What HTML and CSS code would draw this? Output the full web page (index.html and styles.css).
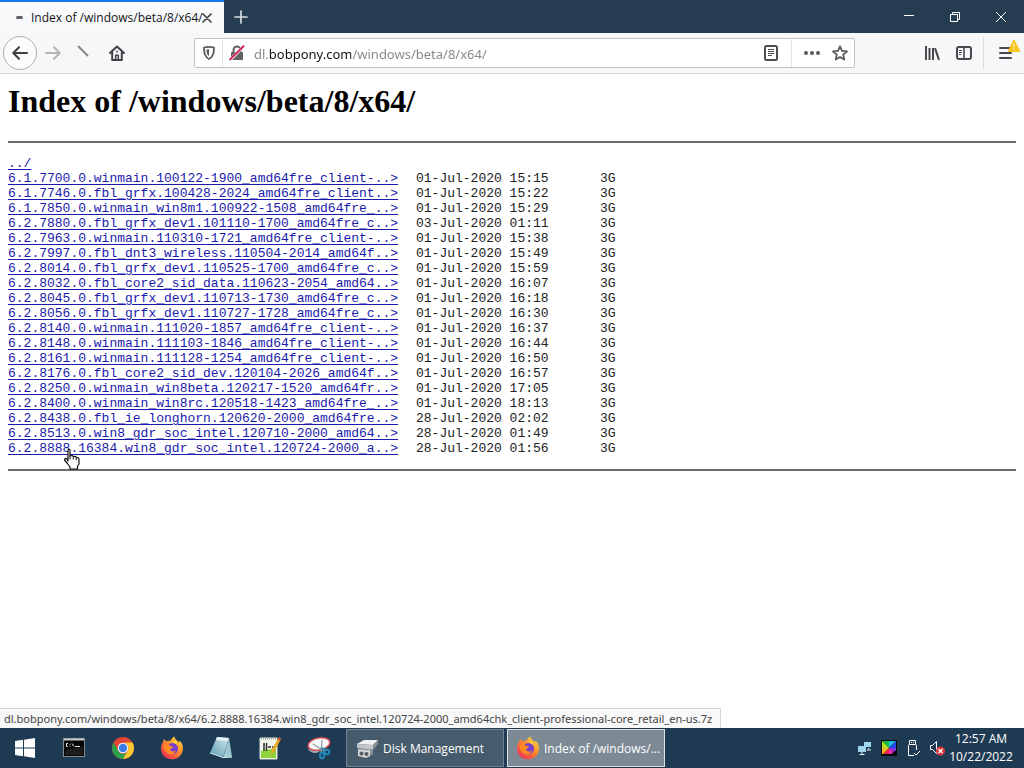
FILE: index.html
```html
<!DOCTYPE html>
<html lang="en">
<head>
<meta charset="utf-8">
<meta name="viewport" content="width=device-width, initial-scale=1">
<title>Index of /windows/beta/8/x64/</title>
<link rel="stylesheet" href="styles.css">
</head>
<body>
<div class="desktop">
  <header class="titlebar">
    <div class="tab">
      <span class="tab-loading"></span>
      <span class="tab-title">Index of /windows/beta/8/x64/</span>
      <button class="tab-close" aria-label="Close tab"><svg width="10" height="10" viewBox="0 0 10 10"><path d="M1 1l8 8M9 1l-8 8" stroke="#444" stroke-width="1.7" stroke-linecap="round"/></svg></button>
    </div>
    <button class="new-tab" aria-label="New tab"><svg width="14" height="14" viewBox="0 0 14 14"><path d="M7 1v12M1 7h12" stroke="#d3dbe2" stroke-width="1.7" stroke-linecap="round"/></svg></button>
    <div class="window-controls">
      <button class="window-button" aria-label="Minimize"><svg width="10" height="10" viewBox="0 0 10 10"><path d="M0 3.500h10" stroke="#fff"/></svg></button>
      <button class="window-button" aria-label="Restore"><svg width="10" height="10" viewBox="0 0 10 10" fill="none" stroke="#fff"><path d="M.5 2.500h7v7h-7zM2.500 2.500v-2h7v7h-2"/></svg></button>
      <button class="window-button" aria-label="Close"><svg width="10" height="10" viewBox="0 0 10 10"><path d="M0 0l10 10M10 0L0 10" stroke="#fff"/></svg></button>
    </div>
  </header>

  <nav class="toolbar" aria-label="Navigation">
    <button class="tool back" aria-label="Back"><svg width="16" height="14" viewBox="0 0 16 14" fill="none" stroke="#3e3e42" stroke-width="2" stroke-linecap="round" stroke-linejoin="round"><path d="M15 7H1.500M7 1.200L1.300 7 7 12.800"/></svg></button>
    <button class="tool" aria-label="Forward"><svg width="16" height="14" viewBox="0 0 16 14" fill="none" stroke="#b5b5b7" stroke-width="2" stroke-linecap="round" stroke-linejoin="round"><path d="M1 7h13.500M9 1.200L14.700 7 9 12.800"/></svg></button>
    <button class="tool" aria-label="Stop"><svg width="16" height="16" viewBox="0 0 16 16"><path d="M1 1l10 10" stroke="#88888a" stroke-width="2"/></svg></button>
    <button class="tool home" aria-label="Home"><svg width="16" height="16" viewBox="0 0 16 16" fill="none" stroke="#414145" stroke-width="2" stroke-linejoin="round" stroke-linecap="round"><path d="M1 8l7-6.500L15 8M3.200 7.500V15h9.600V7.500"/><path d="M6.700 14.500v-4.300h2.600v4.300M8 6.300v.6" stroke-width="1.500"/></svg></button>
    <div class="urlbar">
      <button class="url-tool shield" aria-label="Tracking protection"><svg width="14" height="16" viewBox="0 0 14 16"><path d="M7 1.800c2 0 3.700.3 5 .8.2 5-.8 9.200-5 11.400C2.800 11.800 1.800 7.600 2 2.600c1.300-.5 3-.8 5-.8z" fill="none" stroke="#5c5c60" stroke-width="1.800" stroke-linejoin="round"/><path d="M7 4.300v7C5 9.800 4.400 7.500 4.400 4.700 5.100 4.400 6 4.300 7 4.300z" fill="#5c5c60"/></svg></button>
      <button class="url-tool" aria-label="Connection not secure"><svg width="16" height="16" viewBox="0 0 16 16"><path d="M4.500 8V5a3.500 3.500 0 0 1 7 0v3" fill="none" stroke="#626266" stroke-width="2"/><rect x="2" y="7" width="12" height="8" rx="1" fill="#626266"/><path d="M1 15L14.500 1.500" stroke="#fff" stroke-width="3"/><path d="M1.200 14.400L14.500 1.200" stroke="#cf2459" stroke-width="2" stroke-linecap="round"/></svg></button>
      <input class="address" type="text" aria-label="Address" value="dl.bobpony.com/windows/beta/8/x64/" spellcheck="false">
      <button class="url-tool reader" aria-label="Reader view"><svg width="14" height="16" viewBox="0 0 14 16" fill="none" stroke="#505054"><rect x="1" y="1" width="12" height="14" rx="1.500" stroke-width="2"/><path d="M4 4.500h6M4 6.500h6M4 8.500h6M4 10.500h4"/></svg></button>
      <span class="url-actions">
        <button class="url-tool" aria-label="Page actions"><svg width="16" height="6" viewBox="0 0 16 6" fill="#5a5a5e"><circle cx="2" cy="3" r="2"/><circle cx="8" cy="3" r="2"/><circle cx="14" cy="3" r="2"/></svg></button>
        <button class="url-tool" aria-label="Bookmark this page"><svg width="16" height="16" viewBox="0 0 16 16"><path d="M8 1.300l2 4.600 5 .5-3.800 3.300 1.100 4.900L8 12l-4.300 2.600 1.100-4.900L1 6.400l5-.5z" fill="none" stroke="#5a5a5e" stroke-width="1.800" stroke-linejoin="round"/></svg></button>
      </span>
    </div>
    <div class="toolbar-end">
      <button class="tool" aria-label="Library"><svg width="16" height="16" viewBox="0 0 16 16"><path d="M2 1v14M5.500 3v12M9 3v12M11 3.200l4 11.600" stroke="#48484c" stroke-width="2"/></svg></button>
      <button class="tool" aria-label="Sidebar"><svg width="16" height="14" viewBox="0 0 16 14" fill="none" stroke="#48484c"><rect x="1" y="1" width="14" height="12" rx="2" stroke-width="2"/><path d="M8 1v12" stroke-width="1.600"/><path d="M3 4.500h3M3 6.500h3M3 8.500h2"/></svg></button>
      <button class="tool menu" aria-label="Open menu"><svg width="14" height="14" viewBox="0 0 14 14"><path d="M1 2h11M1 7h11M1 12h11" stroke="#48484c" stroke-width="2" stroke-linecap="round"/></svg><svg class="menu-alert" width="12" height="12" viewBox="0 0 12 12"><path d="M6 1l5 10H1z" fill="#f8c51c" stroke="#f8c51c" stroke-width="2" stroke-linejoin="round"/><path d="M6 3.500v4M6 8.800v1.400" stroke="#fff3c0" stroke-width="1.300"/></svg></button>
    </div>
  </nav>

  <main class="page">
    <h1 class="heading">Index of /windows/beta/8/x64/</h1>
    <hr class="rule">
    <table class="listing">
      <tr><td class="name"><a href="#">../</a></td><td class="date"></td><td></td></tr>
      <tr><td><a href="#">6.1.7700.0.winmain.100122-1900_amd64fre_client-..&gt;</a></td><td>01-Jul-2020 15:15</td><td>3G</td></tr>
      <tr><td><a href="#">6.1.7746.0.fbl_grfx.100428-2024_amd64fre_client..&gt;</a></td><td>01-Jul-2020 15:22</td><td>3G</td></tr>
      <tr><td><a href="#">6.1.7850.0.winmain_win8m1.100922-1508_amd64fre_..&gt;</a></td><td>01-Jul-2020 15:29</td><td>3G</td></tr>
      <tr><td><a href="#">6.2.7880.0.fbl_grfx_dev1.101110-1700_amd64fre_c..&gt;</a></td><td>03-Jul-2020 01:11</td><td>3G</td></tr>
      <tr><td><a href="#">6.2.7963.0.winmain.110310-1721_amd64fre_client-..&gt;</a></td><td>01-Jul-2020 15:38</td><td>3G</td></tr>
      <tr><td><a href="#">6.2.7997.0.fbl_dnt3_wireless.110504-2014_amd64f..&gt;</a></td><td>01-Jul-2020 15:49</td><td>3G</td></tr>
      <tr><td><a href="#">6.2.8014.0.fbl_grfx_dev1.110525-1700_amd64fre_c..&gt;</a></td><td>01-Jul-2020 15:59</td><td>3G</td></tr>
      <tr><td><a href="#">6.2.8032.0.fbl_core2_sid_data.110623-2054_amd64..&gt;</a></td><td>01-Jul-2020 16:07</td><td>3G</td></tr>
      <tr><td><a href="#">6.2.8045.0.fbl_grfx_dev1.110713-1730_amd64fre_c..&gt;</a></td><td>01-Jul-2020 16:18</td><td>3G</td></tr>
      <tr><td><a href="#">6.2.8056.0.fbl_grfx_dev1.110727-1728_amd64fre_c..&gt;</a></td><td>01-Jul-2020 16:30</td><td>3G</td></tr>
      <tr><td><a href="#">6.2.8140.0.winmain.111020-1857_amd64fre_client-..&gt;</a></td><td>01-Jul-2020 16:37</td><td>3G</td></tr>
      <tr><td><a href="#">6.2.8148.0.winmain.111103-1846_amd64fre_client-..&gt;</a></td><td>01-Jul-2020 16:44</td><td>3G</td></tr>
      <tr><td><a href="#">6.2.8161.0.winmain.111128-1254_amd64fre_client-..&gt;</a></td><td>01-Jul-2020 16:50</td><td>3G</td></tr>
      <tr><td><a href="#">6.2.8176.0.fbl_core2_sid_dev.120104-2026_amd64f..&gt;</a></td><td>01-Jul-2020 16:57</td><td>3G</td></tr>
      <tr><td><a href="#">6.2.8250.0.winmain_win8beta.120217-1520_amd64fr..&gt;</a></td><td>01-Jul-2020 17:05</td><td>3G</td></tr>
      <tr><td><a href="#">6.2.8400.0.winmain_win8rc.120518-1423_amd64fre_..&gt;</a></td><td>01-Jul-2020 18:13</td><td>3G</td></tr>
      <tr><td><a href="#">6.2.8438.0.fbl_ie_longhorn.120620-2000_amd64fre..&gt;</a></td><td>28-Jul-2020 02:02</td><td>3G</td></tr>
      <tr><td><a href="#">6.2.8513.0.win8_gdr_soc_intel.120710-2000_amd64..&gt;</a></td><td>28-Jul-2020 01:49</td><td>3G</td></tr>
      <tr><td><a href="#">6.2.8888.16384.win8_gdr_soc_intel.120724-2000_a..&gt;</a></td><td>28-Jul-2020 01:56</td><td>3G</td></tr>
    </table>
    <hr class="rule">
    <svg class="pointer" width="18" height="22" viewBox="0 0 18 22"><path d="M5 2q1-1.500 2 0v6l2-.5 1.500 1 2-.2 1 1.200h1.500l1 1.500v5l-1.500 2v3H7v-2l-3-4-2.500-3 .5-1.500h1.500L5 13z" fill="#fff" stroke="#111" stroke-width="1.200" stroke-linejoin="round"/><path d="M7 8v3.500M10.300 8.500v3M13.200 9.500v2.500" stroke="#111"/></svg>
  </main>

  <div class="link-status">dl.bobpony.com/windows/beta/8/x64/6.2.8888.16384.win8_gdr_soc_intel.120724-2000_amd64chk_client-professional-core_retail_en-us.7z</div>

  <footer class="taskbar">
    <button class="launcher" aria-label="Start"><svg width="20" height="20" viewBox="0 0 20 20" fill="#fff"><path d="M0 3l8-1.200v7.700H0zM9 1.700L20 0v9.500H9zM0 10.500h8v7.700L0 17zM9 10.500h11V20L9 18.300z"/></svg></button>
    <button class="launcher" aria-label="Command Prompt"><svg width="22" height="20" viewBox="0 0 22 20"><rect x=".5" y=".5" width="21" height="18" fill="#050505" stroke="#858b90"/><path d="M1 1.500h20" stroke="#c5c9cc" stroke-width="2"/><path d="M5 5.500H3.500v3H5M7 6v.8M7 8v.8M9 5.500l2 3M12 8.500h5" stroke="#e5e5e5" fill="none"/><path d="M2 13c7-3 12-3 18-4v8H2z" fill="#1d1d1d"/></svg></button>
    <button class="launcher" aria-label="Chrome"><svg width="22" height="22" viewBox="0 0 22 22"><circle cx="11" cy="11" r="11" fill="#e34436"/><path d="M1.500 5.500A11 11 0 0 0 11 22l5-8.300A5.500 5.500 0 0 1 6 13.500z" fill="#2ca14c"/><path d="M11 5.500h9.500A11 11 0 0 1 11 22l4.800-8.300A5.500 5.500 0 0 0 11 5.500z" fill="#fbc92d"/><circle cx="11" cy="11" r="5.300" fill="#fff"/><circle cx="11" cy="11" r="4.200" fill="#3b7de8"/></svg></button>
    <button class="launcher" aria-label="Firefox"><svg width="24" height="24" viewBox="0 0 24 24"><defs><linearGradient id="flame" x1="1" y1="0" x2=".2" y2="1"><stop offset="0" stop-color="#fff04a"/><stop offset=".45" stop-color="#ff9328"/><stop offset="1" stop-color="#f02b56"/></linearGradient></defs><g id="fox"><path d="M3 6l1-3 2.500 2.200C8 4.500 9.500 4.500 10.500 5 11 3 12.500 1.500 14.500.5c0 2.500 3 4 4.500 6l.5-2c3 3 4 6.500 3.200 10C21.500 20 17 23.300 12 23.300 5.500 23.300 1 18.500 1 12.500 1 10 1.800 8 3 6z" fill="url(#flame)"/><circle cx="12.500" cy="12.500" r="5.500" fill="#7b3fd0"/><path d="M4 9c3-2 5-1 6 1l3 .5c0 1.500-2 1.800-3 3 1 2.500 4 2.500 6 1-1 4-7 5-10 1.500C4 14 3.500 11.500 4 9z" fill="#ff8b22"/><path d="M12 7c2-.5 4 .5 5 2.500.3-2-.5-4-2-5z" fill="#ffd338"/></g></svg></button>
    <button class="launcher" aria-label="Notepad"><svg width="24" height="24" viewBox="0 0 24 24"><defs><linearGradient id="sheet" x1="1" y1="0" x2="0" y2="1"><stop offset="0" stop-color="#cfeaee"/><stop offset="1" stop-color="#5e9db0"/></linearGradient></defs><path d="M8 1l12 1-6 19L1 17z" fill="url(#sheet)"/><path d="M8 1l12 1-1 3L7 4z" fill="#e2f1f2"/><path d="M20 2l3 19-9 1z" fill="#9cc9d2"/><path d="M1 17l13 4.500 9-.5" stroke="#dbe8ea" fill="none"/></svg></button>
    <button class="launcher" aria-label="Notepad++"><svg width="24" height="24" viewBox="0 0 24 24"><path d="M2 2h17v21H2z" fill="#f4f7ef" stroke="#dfe6dc"/><path d="M3 15l15-3v10H3z" fill="#8fd23a"/><path d="M3 2.500h15" stroke="#99a39a" stroke-width="2" stroke-dasharray="1 1"/><path d="M6 7v8M8.500 7v8M10 11h3M14 11h2" stroke="#263322" stroke-width="1.500"/><path d="M21 1l2 2-7 13-3 2 .5-4z" fill="#e7ae26"/><path d="M21 1l2 2-1 2-2.500-2z" fill="#d5473b"/></svg></button>
    <button class="launcher" aria-label="Snipping Tool"><svg width="24" height="24" viewBox="0 0 24 24"><path d="M1 13c3 5 9 5 12 2L9 12z" fill="#9fa5ac"/><ellipse cx="12" cy="8" rx="11" ry="6" transform="rotate(-12 12 8)" fill="#f7f7f8" stroke="#d84d55" stroke-width="1.500"/><path d="M6 8l11 7M15 4l-1 13" stroke="#9aa2a9" stroke-width="1.300"/><g fill="none" stroke="#2487b5" stroke-width="2"><path d="M14 12l6 2"/><circle cx="20" cy="16" r="2.300"/><ellipse cx="15" cy="19.500" rx="2" ry="3"/></g></svg></button>
    <button class="task"><svg width="24" height="24" viewBox="0 0 24 24"><path d="M2 8l7-4h14l-5 5z" fill="#f0f1f2"/><path d="M2 8l16 1v5L2 12z" fill="#c3c6c8"/><path d="M18 9l5-5v4l-5 6z" fill="#8a8f93"/><path d="M3 13l12 1v6l-4 2-8-2z" fill="#d0d2d3"/><path d="M15 14l3-1v5l-3 2z" fill="#888e92"/><circle cx="6.500" cy="17.500" r="2" fill="#555d62"/><circle cx="11.500" cy="18" r="2" fill="#555d62"/></svg><span class="task-label">Disk Management</span></button>
    <button class="task task-active"><svg width="24" height="24" viewBox="0 0 24 24"><use href="#fox"/></svg><span class="task-label">Index of /windows/...</span></button>
    <div class="tray">
      <button class="tray-icon" aria-label="Network"><svg width="16" height="16" viewBox="0 0 16 16"><path d="M6.500 1.500h8v6h-8z" fill="#9fd6ed" stroke="#1f3b54"/><path d="M1 6h8v6H1z" fill="#9fd6ed"/><path d="M5 12v2M2.500 14.500h5M11.500 8v1.500M10 10h4" stroke="#e8f4fa"/></svg></button>
      <button class="tray-icon" aria-label="Display color"><svg width="16" height="16" viewBox="0 0 16 16"><path d="M0 0h16v16H0z" fill="#080808"/><path d="M8 8L1 1h7z" fill="#17b84a"/><path d="M8 8V1h7z" fill="#21bce8"/><path d="M8 8l7-7v7z" fill="#244be6"/><path d="M8 8h7v6z" fill="#8a2be8"/><path d="M8 8l7 6H8z" fill="#e82ab0"/><path d="M8 8v6H2z" fill="#ed2345"/><path d="M8 8l-6 6H1V8z" fill="#f5b428"/><path d="M8 8H1V1z" fill="#b8e324"/><path d="M12 15.500l3.500-3.500" stroke="#080808" stroke-width="4"/></svg></button>
      <button class="tray-icon" aria-label="USB device"><svg width="16" height="18" viewBox="0 0 16 18" fill="none" stroke="#fff"><path d="M4.500 5.500v-4h6v4M6.500 3v1M8.500 3v1M9 16.500H3.500v-10q0-1 1-1h6q1 0 1 1V11M9 14l2 2 4-4"/></svg></button>
      <button class="tray-icon" aria-label="Volume muted"><svg width="18" height="16" viewBox="0 0 18 16"><path d="M2.500 5.500h2l4-4v12l-4-4h-2z" fill="none" stroke="#fff"/><circle cx="12.500" cy="11" r="4.500" fill="#d8383d"/><path d="M10.500 9l4 4M14.500 9l-4 4" stroke="#fff" stroke-width="1.300"/></svg></button>
      <button class="clock"><span>12:57 AM</span><span>10/22/2022</span></button>
    </div>
  </footer>
</div>
</body>
</html>
```
FILE: styles.css
```css
* { box-sizing: border-box; }
body { margin: 0; background: #fff; }
svg { display: block; flex: none; }
button { display: flex; align-items: center; justify-content: center; padding: 0; border: 0; background: none; color: inherit; font: inherit; }

.desktop { display: flex; flex-direction: column; min-height: 100vh; font-family: "Open Sans", "Noto Sans", sans-serif; font-size: 12px; }

.titlebar { display: flex; height: 33px; background: #263c50; }
.tab { display: flex; align-items: center; width: 224px; padding: 0 12px 0 16px; border-top: 2px solid #1678e8; background: #f8f9fb; }
.tab-loading { flex: none; width: 7px; height: 3px; margin-right: 8px; border-radius: 2px; background: #626266; }
.tab-title { flex: 1; min-width: 0; color: #161618; white-space: nowrap; }
.tab-close { width: 10px; height: 16px; }
.new-tab { width: 34px; }
.window-controls { display: flex; margin-left: auto; }
.window-button { width: 46px; }

.toolbar { display: flex; align-items: center; height: 41px; padding: 0 1px 0 3px; border-bottom: 1px solid #d2d3d5; background: #f6f7f8; }
.tool { flex: none; width: 32px; height: 32px; }
.back { width: 34px; height: 34px; border: 1px solid #b0b0b3; border-radius: 50%; background: #fcfcfc; }
.home { margin-right: 61px; }
.urlbar { display: flex; flex: 1; align-items: center; min-width: 0; height: 30px; border: 1px solid #bfc1c4; border-radius: 2px; background: #fff; }
.url-tool { flex: none; width: 28px; height: 28px; }
.shield { border-right: 1px solid #e3e3e5; }
.address { flex: 1; min-width: 0; height: 28px; padding: 2px 0 0 3px; border: 0; outline: 0; font-family: "Noto Sans", "Open Sans", sans-serif; font-size: 13px; background: linear-gradient(to right, #858588 17px, #111 17px 100px, #858588 100px); -webkit-background-clip: text; background-clip: text; color: transparent; }
.reader { margin-right: 6px; }
.url-actions { display: flex; padding-left: 6px; border-left: 1px solid #e3e3e5; }
.toolbar-end { display: flex; margin-left: 61px; }
.menu { position: relative; width: 40px; margin-left: 3px; padding-left: 4px; border-left: 1px solid #dcdcde; }
.menu-alert { position: absolute; top: 3px; right: 3px; }

.page { position: relative; flex: 1; padding: 8px; color: #000; }
.heading { margin: 0 0 21px; font-family: "Liberation Serif", serif; font-size: 32px; line-height: 38px; }
.rule { height: 2px; margin: 0; border: 0; background: #6c6c6c; }
.listing { margin: 13px 0; border-collapse: collapse; font-family: "Liberation Mono", monospace; font-size: 13px; line-height: 15px; color: #222; white-space: nowrap; }
.listing td { padding: 0; }
.listing a { color: #1a1aac; text-underline-offset: 2px; }
.name { width: 408px; }
.date { width: 184px; }
.pointer { position: absolute; top: 374px; left: 63px; }

.link-status { align-self: flex-start; height: 20px; padding: 0 8px 0 4px; border: 1px solid #d5d6d8; border-width: 1px 1px 0 0; background: #f8f8f9; color: #444; font-family: "Noto Sans", "Open Sans", sans-serif; font-size: 11px; line-height: 20px; white-space: nowrap; }

.taskbar { display: flex; align-items: center; height: 40px; background: #1f3b54; color: #fff; }
.launcher { flex: none; width: 49px; height: 40px; }
.task { justify-content: flex-start; gap: 4px; width: 158px; height: 38px; margin-left: 3px; padding: 0 8px; border: 1px solid #71828f; background: #465c6c; }
.task-active { border-color: #dce3e8; background: #7d8a95; }
.task-label { white-space: nowrap; }
.tray { display: flex; align-items: center; margin-left: auto; }
.tray-icon { width: 24px; height: 40px; }
.clock { flex-direction: column; width: 64px; margin-right: 11px; line-height: 18px; }
```
